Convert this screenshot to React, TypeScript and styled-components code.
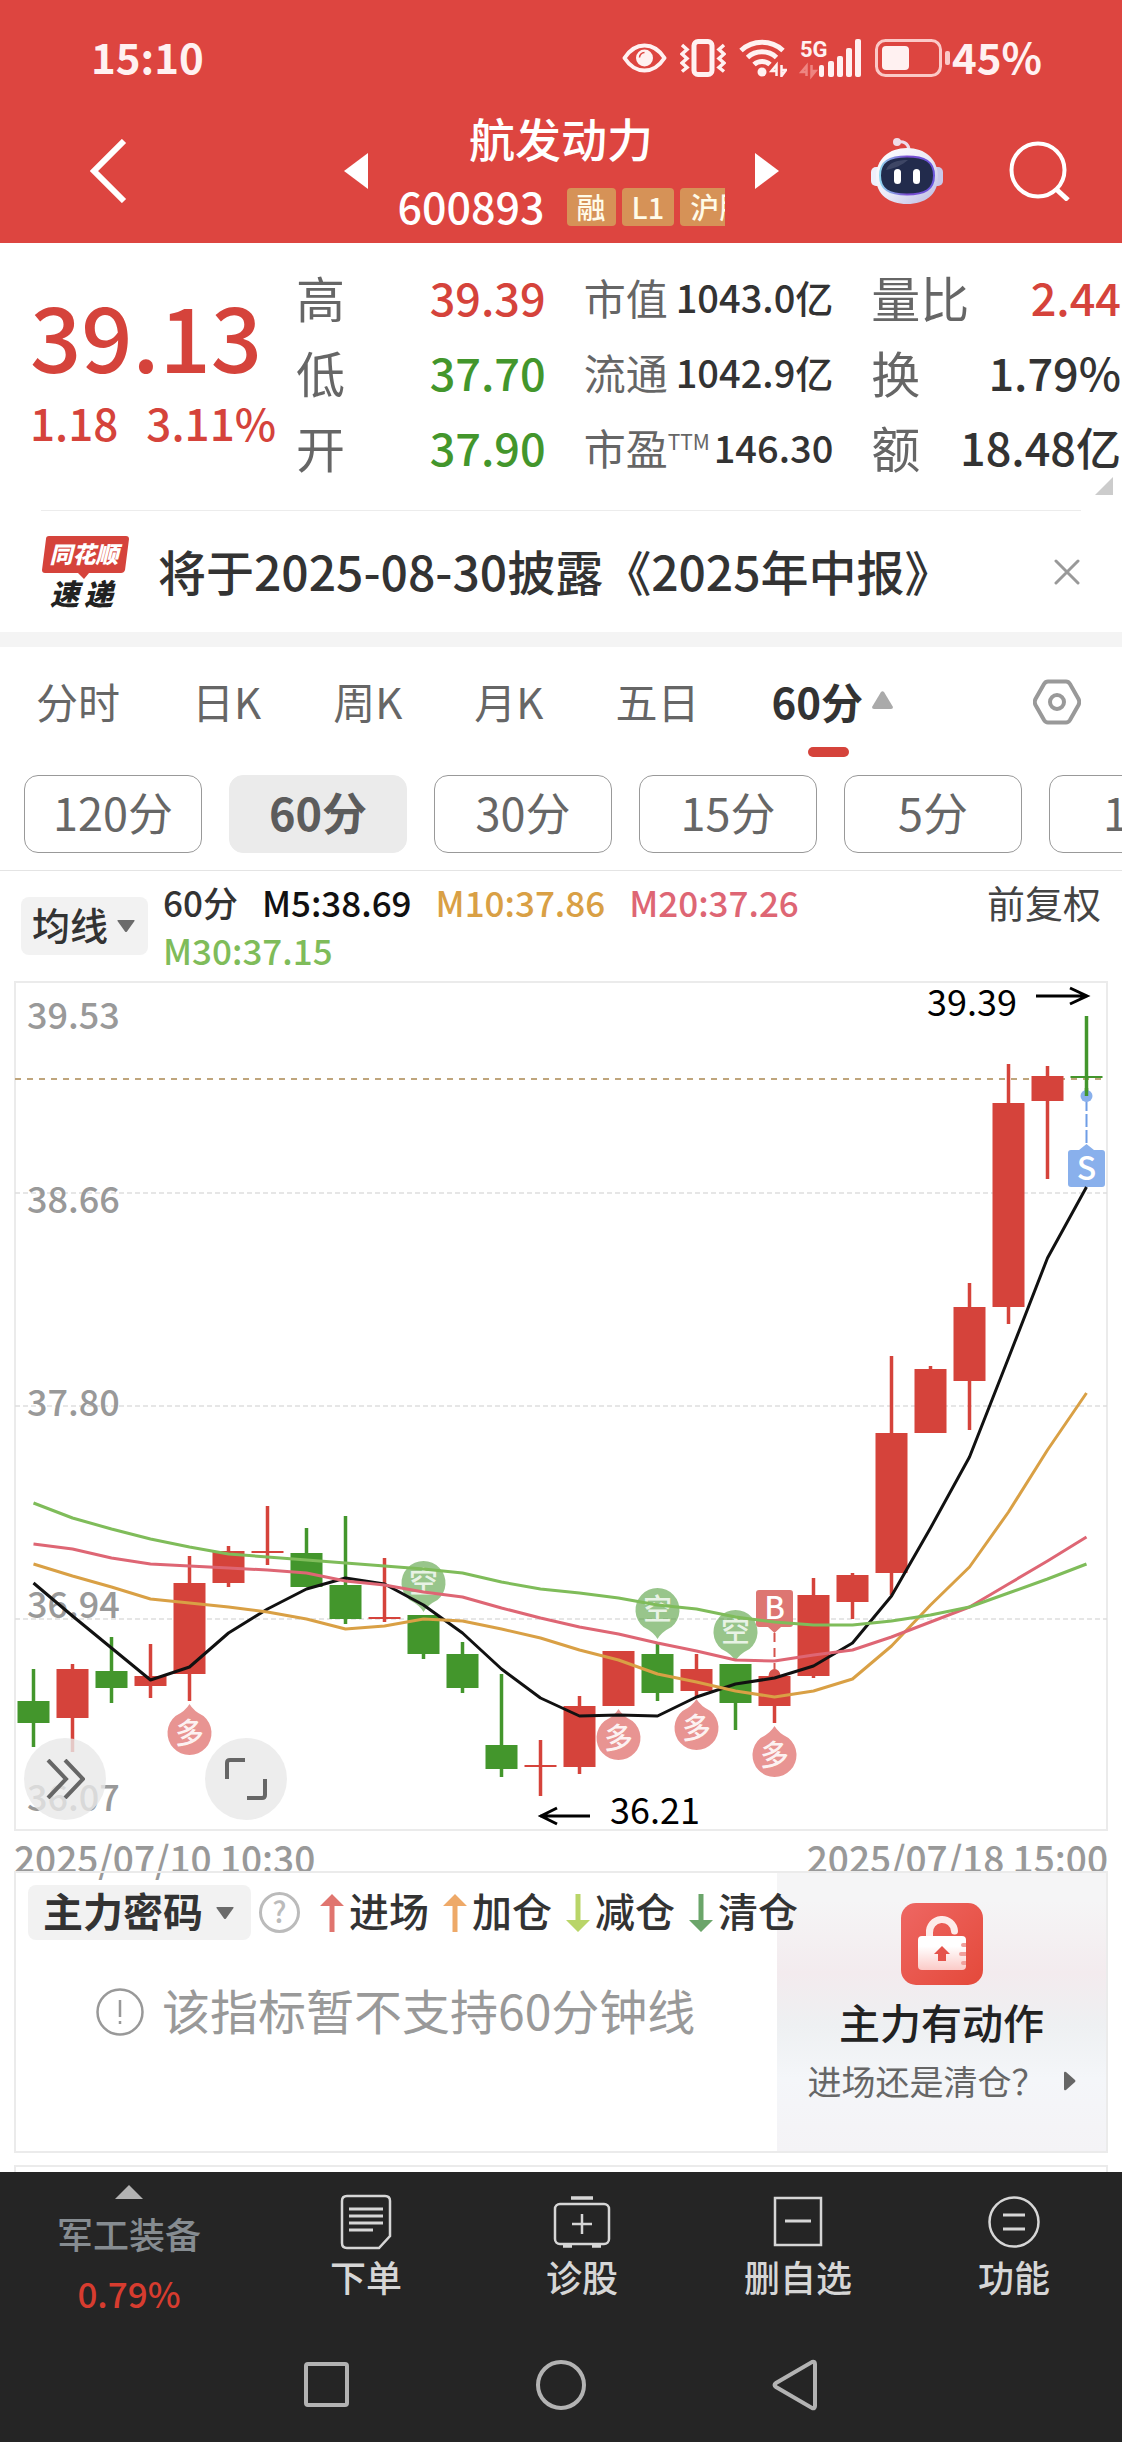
import React from "react";
import styled, { createGlobalStyle } from "styled-components";

const UP = "#d5433b";
const DOWN = "#43962c";
const RULE = "#ebebeb";

const GlobalStyle = createGlobalStyle`
  * { box-sizing: border-box; }
  body {
    margin: 0;
    background: #fff;
    color: #333;
    font-family: "Noto Sans CJK SC", "Noto Sans", sans-serif;
    font-weight: 500;
    overflow-x: hidden;
  }
  button, select { font: inherit; color: inherit; border: 0; background: none; padding: 0; margin: 0; }
  svg { display: block; flex: none; }
  dl, dt, dd, h1, p { margin: 0; font-weight: inherit; }
`;

const Page = styled.main`
  display: flex;
  flex-direction: column;
  min-height: 100vh;
`;

/* ---------- header ---------- */

const Header = styled.header`
  background: #dd4540;
  color: #fff;
`;

const StatusBar = styled.div`
  display: flex;
  align-items: center;
  height: 116px;
  padding: 0 80px 0 91px;
  color: #fff1f1;
`;

const StatusText = styled.span`
  padding-bottom: 5px;
  font-size: 42px;
  font-weight: 700;
  line-height: 48px;
`;

const StatusIcons = styled.div`
  display: flex;
  align-items: center;
  margin-left: auto;
  margin-right: 2px;
  gap: 13px;
`;

const TitleBar = styled.div`
  display: grid;
  grid-template-columns: 1fr auto 1fr;
  align-items: center;
  padding: 0 52px 17px;
`;

const TitleSide = styled.div<{ $end?: boolean }>`
  display: flex;
  align-items: center;
  justify-content: ${(p) => (p.$end ? "flex-end" : "flex-start")};
  padding-left: 38px;
  gap: 66px;
`;

const Switcher = styled.div`
  display: flex;
  align-items: center;
  gap: 30px;
`;

const StockTitle = styled.div`
  display: flex;
  flex-direction: column;
  width: 327px;
  gap: 24px;
`;

const StockName = styled.h1`
  padding-bottom: 6px;
  text-align: center;
  font-size: 46px;
  font-weight: 500;
  line-height: 42px;
`;

const CodeRow = styled.div`
  display: flex;
  align-items: center;
  gap: 6px;
  height: 38px;
  overflow-x: clip;
`;

const Code = styled.span`
  flex: none;
  margin-right: 16px;
  padding-bottom: 4px;
  font-size: 43px;
  line-height: 38px;
`;

const Tag = styled.span`
  flex: none;
  height: 38px;
  padding: 0 10px;
  border-radius: 4px;
  background: #d69257;
  color: #fffbe8;
  font-size: 29px;
  line-height: 36px;
`;

const IconButton = styled.button`
  display: flex;
  align-items: center;
  justify-content: center;
  cursor: pointer;
`;

/* ---------- quote ---------- */

const Quote = styled.section`
  position: relative;
  display: flex;
  padding: 19px 1px 23px 30px;
`;

const PriceBlock = styled.div`
  display: flex;
  flex-direction: column;
  width: 266px;
  flex: none;
  color: ${UP};
`;

const Price = styled.div`
  padding-top: 22px;
  font-size: 90px;
  line-height: 100px;
`;

const Change = styled.div`
  display: flex;
  gap: 28px;
  margin-top: 13px;
  font-size: 44px;
  line-height: 50px;
  white-space: nowrap;
`;

const Stats = styled.dl`
  flex: 1;
  display: grid;
  grid-template-columns: repeat(3, minmax(0, 1fr));
  column-gap: 38px;
`;

const Stat = styled.div<{ $small?: boolean }>`
  display: flex;
  align-items: center;
  justify-content: space-between;
  height: 75px;
  padding-bottom: 6px;
  white-space: nowrap;
  font-size: ${(p) => (p.$small ? 38 : 45)}px;
`;

const StatLabel = styled.dt<{ $small?: boolean }>`
  color: #666;
  font-size: ${(p) => (p.$small ? 42 : 49)}px;
  font-weight: 400;
  sup {
    font-size: 21px;
    line-height: 21px;
    vertical-align: 15px;
  }
`;

const StatValue = styled.dd<{ $color?: string }>`
  color: ${(p) => p.$color ?? "#333"};
`;

const Corner = styled.svg`
  position: absolute;
  right: 9px;
  bottom: 15px;
`;

const News = styled.section`
  display: flex;
  align-items: center;
  height: 122px;
  margin: 0 41px;
  border-top: 1px solid #ececec;
`;

const NewsLink = styled.a`
  flex: 1;
  margin-left: 28px;
  padding-bottom: 4px;
  color: #333;
  font-size: 48px;
  line-height: 60px;
  text-decoration: none;
  white-space: nowrap;
`;

const Band = styled.div`
  height: 15px;
  background: #f4f4f4;
`;

/* ---------- period tabs ---------- */

const Tabs = styled.nav`
  display: flex;
  align-items: center;
  height: 110px;
  padding: 0 41px 0 36px;
  gap: 72px;
`;

const Tab = styled.button<{ $active?: boolean }>`
  position: relative;
  display: flex;
  align-items: center;
  gap: 9px;
  height: 110px;
  padding-bottom: 4px;
  font-size: 42px;
  white-space: nowrap;
  font-weight: ${(p) => (p.$active ? 700 : 400)};
  color: ${(p) => (p.$active ? "#333" : "#666")};
  &::after {
    content: "";
    display: ${(p) => (p.$active ? "block" : "none")};
    position: absolute;
    left: 50%;
    bottom: 0;
    width: 41px;
    height: 10px;
    margin-left: -24px;
    border-radius: 5px;
    background: ${UP};
  }
`;

const SettingsButton = styled(IconButton)`
  margin-left: auto;
`;

const Chips = styled.div`
  display: flex;
  gap: 27px;
  padding: 18px 0 17px 24px;
  overflow: hidden;
  border-bottom: 1px solid #e4e4e4;
`;

const Chip = styled.button<{ $active?: boolean }>`
  flex: none;
  width: 178px;
  height: 78px;
  padding-bottom: 4px;
  border: 1px solid ${(p) => (p.$active ? "#ebebeb" : "#999")};
  border-radius: 14px;
  background: ${(p) => (p.$active ? "#ebebeb" : "#fff")};
  color: ${(p) => (p.$active ? "#5c5c5c" : "#666")};
  font-size: 45px;
  line-height: 60px;
  font-weight: ${(p) => (p.$active ? 700 : 400)};
`;

/* ---------- moving averages ---------- */

const Averages = styled.section`
  display: flex;
  align-items: flex-start;
  padding: 7px 21px;
`;

const Picker = styled.div<{ $tall?: boolean }>`
  display: grid;
  align-items: center;
  flex: none;
  margin-top: ${(p) => (p.$tall ? 0 : 19)}px;
  svg { grid-area: 1 / 1; justify-self: end; margin-right: ${(p) => (p.$tall ? 17 : 13)}px; pointer-events: none; }
`;

const PickerSelect = styled.select<{ $tall?: boolean }>`
  grid-area: 1 / 1;
  appearance: none;
  width: ${(p) => (p.$tall ? 223 : 127)}px;
  height: ${(p) => (p.$tall ? 55 : 58)}px;
  padding-left: ${(p) => (p.$tall ? 15 : 11)}px;
  padding-bottom: 5px;
  border-radius: 8px;
  background: #f2f2f2;
  font-size: ${(p) => (p.$tall ? 40 : 38)}px;
  line-height: 50px;
  font-weight: ${(p) => (p.$tall ? 700 : 500)};
  color: #333;
`;

const Legend = styled.div`
  flex: 1;
  display: flex;
  flex-wrap: wrap;
  column-gap: 24px;
  margin: 0 12px 0 15px;
  font-size: 35px;
  line-height: 48px;
`;

const LegendItem = styled.span<{ $color: string }>`
  color: ${(p) => p.$color};
`;

const AdjustButton = styled.button`
  color: #444;
  font-size: 38px;
  font-weight: 400;
  line-height: 48px;
`;

/* ---------- chart ---------- */

const ChartWrap = styled.section`
  position: relative;
  margin: 0 14px;
`;

const ChartSvg = styled.svg`
  width: 100%;
  height: auto;
  font-family: "Noto Sans CJK SC", "Noto Sans", sans-serif;
`;

const RoundButtons = styled.div`
  position: absolute;
  left: 10px;
  bottom: 11px;
  display: flex;
  gap: 99px;
`;

const RoundButton = styled(IconButton)`
  width: 82px;
  height: 82px;
  border-radius: 50%;
  background: rgba(232, 232, 232, 0.8);
`;

const Dates = styled.div`
  display: flex;
  justify-content: space-between;
  height: 40px;
  margin: 0 14px;
  color: #999;
  font-size: 37px;
  line-height: 52px;
`;

/* ---------- indicator ---------- */

const Indicator = styled.section`
  position: relative;
  display: flex;
  height: 282px;
  margin: 0 14px;
  border: 2px solid ${RULE};
`;

const IndicatorMain = styled.div`
  position: relative;
  z-index: 1;
  flex: 1;
  min-width: 0;
  padding: 12px 0 0 12px;
`;

const IndicatorRow = styled.div`
  display: flex;
  align-items: center;
  white-space: nowrap;
`;

const HelpButton = styled(IconButton)`
  margin: 0 20px 0 8px;
`;

const Signals = styled.div`
  display: flex;
  gap: 14px;
`;

const Signal = styled.span`
  display: flex;
  align-items: center;
  gap: 5px;
  font-size: 40px;
`;

const SignalName = styled.span`
  padding-bottom: 5px;
  line-height: 50px;
`;

const Notice = styled.p`
  display: flex;
  align-items: center;
  gap: 18px;
  margin: 36px 0 0 68px;
  color: #999;
  font-size: 48px;
  font-weight: 400;
  line-height: 72px;
  white-space: nowrap;
`;

const NoticeText = styled.span`
  padding-bottom: 5px;
  line-height: 67px;
`;

const Promo = styled.a`
  display: flex;
  flex-direction: column;
  align-items: center;
  flex: none;
  width: 329px;
  padding-top: 30px;
  background: linear-gradient(#f5f5f6 10%, #f3ebee 36%, #eef0f2 55%, #f4f6f9 74%, #f4f3f6);
  color: #222;
  text-decoration: none;
`;

const PromoTitle = styled.strong`
  margin-top: 8px;
  font-size: 41px;
  line-height: 56px;
  font-weight: 500;
`;

const PromoText = styled.span`
  display: flex;
  align-items: center;
  gap: 18px;
  margin-top: 6px;
  color: #666;
  font-size: 34px;
  font-weight: 400;
  line-height: 52px;
`;

const NextPanel = styled.div`
  height: 7px;
  margin: 12px 14px 0;
  border: 2px solid ${RULE};
  border-bottom: 0;
`;

/* ---------- footer ---------- */

const Footer = styled.footer`
  flex: 1;
  background: #252525;
  color: #d6d6d6;
`;

const Actions = styled.nav`
  display: grid;
  grid-template-columns: 258fr 216fr 216fr 216fr 216fr;
`;

const Action = styled.button`
  display: flex;
  flex-direction: column;
  align-items: center;
  padding-top: 21px;
  font-size: 36px;
  line-height: 50px;
`;

const Sector = styled.button`
  display: flex;
  flex-direction: column;
  align-items: center;
  padding-top: 13px;
  color: #868c91;
  font-size: 36px;
  line-height: 60px;
  svg { margin-bottom: 4px; }
`;

const SectorChange = styled.span`
  color: #d73c2f;
  font-size: 35px;
`;

const SystemNav = styled.nav`
  display: grid;
  grid-template-columns: repeat(3, 1fr);
  padding: 36px 210px 30px;
  justify-items: center;
`;

/* ---------- chart data ---------- */

type Candle = [up: boolean, high: number, low: number, top: number, bottom: number];

const candles: Candle[] = [
  [false, 1669, 1747, 1701, 1723],
  [true, 1664, 1752, 1669, 1718],
  [false, 1637, 1703, 1671, 1688],
  [true, 1644, 1698, 1676, 1686],
  [true, 1556, 1701, 1583, 1674],
  [true, 1546, 1587, 1551, 1583],
  [true, 1506, 1565, 1551, 1553],
  [false, 1528, 1587, 1553, 1587],
  [false, 1516, 1624, 1585, 1619],
  [true, 1558, 1622, 1617, 1619],
  [false, 1615, 1659, 1615, 1654],
  [false, 1642, 1693, 1654, 1688],
  [false, 1674, 1777, 1745, 1769],
  [true, 1740, 1796, 1765, 1767],
  [true, 1696, 1774, 1706, 1767],
  [true, 1651, 1706, 1651, 1706],
  [false, 1644, 1701, 1654, 1693],
  [true, 1654, 1697, 1669, 1691],
  [false, 1664, 1730, 1664, 1703],
  [true, 1672, 1723, 1676, 1706],
  [true, 1578, 1678, 1595, 1676],
  [true, 1573, 1619, 1575, 1602],
  [true, 1356, 1595, 1433, 1573],
  [true, 1366, 1433, 1369, 1433],
  [true, 1283, 1430, 1307, 1381],
  [true, 1064, 1324, 1103, 1307],
  [true, 1066, 1179, 1076, 1101],
  [false, 1016, 1096, 1076, 1078],
];

const averages = [
  { color: "#111", ys: [1583, 1616, 1648, 1680, 1667, 1633, 1609, 1589, 1578, 1584, 1605, 1633, 1669, 1698, 1716, 1715, 1716, 1697, 1684, 1678, 1666, 1643, 1596, 1528, 1457, 1358, 1258, 1187] },
  { color: "#d9a045", ys: [1564, 1576, 1587, 1599, 1603, 1607, 1612, 1619, 1629, 1626, 1619, 1621, 1629, 1638, 1650, 1660, 1674, 1682, 1691, 1697, 1691, 1679, 1646, 1605, 1567, 1512, 1450, 1393] },
  { color: "#de6674", ys: [1544, 1549, 1558, 1564, 1566, 1568, 1570, 1573, 1581, 1585, 1592, 1597, 1608, 1618, 1627, 1634, 1643, 1651, 1660, 1661, 1655, 1650, 1637, 1622, 1607, 1584, 1561, 1537] },
  { color: "#7fbc5a", ys: [1503, 1518, 1529, 1539, 1547, 1554, 1557, 1560, 1563, 1566, 1569, 1573, 1582, 1589, 1593, 1598, 1605, 1609, 1617, 1622, 1625, 1625, 1621, 1615, 1607, 1593, 1579, 1564] },
];

const priceLabels: [string, number][] = [
  ["39.53", 1029],
  ["38.66", 1213],
  ["37.80", 1416],
  ["36.94", 1618],
  ["36.07", 1811],
];

const shortMarks: [number, number][] = [[10, 1583], [16, 1610], [18, 1632]];
const longMarks: [number, number][] = [[4, 1733], [15, 1738], [17, 1728], [19, 1755]];

const columnX = (i: number) => 33.5 + i * 39;

function CandleChart() {
  return (
    <ChartSvg viewBox="14 981 1094 850" role="img" aria-label="60分 K线">
      <rect x="15" y="982" width="1092" height="848" fill="#fff" stroke={RULE} strokeWidth="2" />
      {[1193, 1406, 1619].map((y) => (
        <line key={y} x1="15" x2="1107" y1={y} y2={y} stroke="#dedede" strokeWidth="1.5" strokeDasharray="5 3" />
      ))}
      <line x1="15" x2="1107" y1="1079" y2="1079" stroke="#bfa57c" strokeWidth="2" strokeDasharray="6 6" />
      {priceLabels.map(([text, y]) => (
        <text key={text} x="27" y={y} fontSize="36" fill="#999">{text}</text>
      ))}
      {candles.map(([up, high, low, top, bottom], i) => {
        const x = columnX(i);
        const fill = up ? UP : DOWN;
        return (
          <g key={i} fill={fill}>
            <rect x={x - 1.75} y={high} width="3.5" height={low - high} />
            <rect x={x - 16} y={top} width="32" height={bottom - top} />
          </g>
        );
      })}
      {shortMarks.map(([i, y]) => {
        const x = columnX(i);
        return (
          <g key={i}>
            <path d={`M${x - 14} ${y + 17}A22 22 0 1 1 ${x + 14} ${y + 17}Q${x + 4} ${y + 22} ${x} ${y + 29}Q${x - 4} ${y + 22} ${x - 14} ${y + 17}Z`} fill="#43962c" fillOpacity="0.55" />
            <text x={x} y={y + 10} fontSize="29" fill="#fff" fillOpacity="0.8" textAnchor="middle">空</text>
          </g>
        );
      })}
      {longMarks.map(([i, y]) => {
        const x = columnX(i);
        return (
          <g key={i}>
            <path d={`M${x - 14} ${y - 17}A22 22 0 1 0 ${x + 14} ${y - 17}Q${x + 4} ${y - 22} ${x} ${y - 29}Q${x - 4} ${y - 22} ${x - 14} ${y - 17}Z`} fill="#e89492" />
            <text x={x} y={y + 11} fontSize="29" fill="#fff" fillOpacity="0.9" textAnchor="middle">多</text>
          </g>
        );
      })}
      <g>
        <path d="M759 1590h31a3 3 0 0 1 3 3v31a3 3 0 0 1-3 3h-9l-6.500 6-6.500-6h-9a3 3 0 0 1-3-3v-31a3 3 0 0 1 3-3z" fill="#dd7672" />
        <line x1="774.5" x2="774.5" y1="1633" y2="1672" stroke="#d5534c" strokeWidth="2" strokeDasharray="9 6" />
        <path d="M768.500 1676a6 7 0 0 1 12 0z" fill="#d5534c" />
        <text x="774.5" y="1619" fontSize="31" fill="#fff" textAnchor="middle">B</text>
      </g>
      <g>
        <line x1="1086.5" x2="1086.5" y1="1098" y2="1146" stroke="#6f9de6" strokeWidth="2" strokeDasharray="13 3" />
        <circle cx="1086.5" cy="1096" r="6" fill="#89b0ec" />
        <rect x="1084.75" y="1088" width="3.5" height="8" fill={DOWN} />
        <path d="M1071 1150h8l7.500-6 7.500 6h8a3 3 0 0 1 3 3v31a3 3 0 0 1-3 3h-31a3 3 0 0 1-3-3v-31a3 3 0 0 1 3-3z" fill="#89b0ec" />
        <text x="1086.5" y="1180" fontSize="32" fill="#fff" textAnchor="middle">S</text>
      </g>
      {averages.map(({ color, ys }) => (
        <polyline key={color} points={ys.map((y, i) => `${columnX(i)},${y}`).join(" ")} fill="none" stroke={color} strokeWidth="3" strokeLinejoin="round" />
      ))}
      <g fill="none" stroke="#000" strokeWidth="3">
        <path d="M1036 996h50M1070 988l17 8-17 8" />
        <path d="M590 1816h-50M557 1808l-16 8 16 8" />
      </g>
      <g fill="#000" fontWeight="400" fontSize="36">
        <text x="927" y="1016">39.39</text>
        <text x="610" y="1824">36.21</text>
      </g>
    </ChartSvg>
  );
}

/* ---------- drawings ---------- */

const EyeIcon = () => (
  <svg width="45" height="30" viewBox="0 0 45 30" fill="none" stroke="currentColor" strokeWidth="4">
    <path d="M2.500 15C8 6.500 14.500 2.500 22.500 2.500S37 6.500 42.500 15C37 23.500 30.500 27.500 22.500 27.500S8 23.500 2.500 15z" strokeLinejoin="round" />
    <circle cx="22.500" cy="15" r="8.500" fill="currentColor" stroke="none" />
    <path d="M17.500 14.500a5 5 0 0 1 5-5" stroke="#dd4540" strokeWidth="1.500" />
  </svg>
);

const VibrateIcon = () => (
  <svg width="46" height="38" viewBox="0 0 46 38" fill="none" stroke="currentColor">
    <rect x="14" y="2.500" width="18" height="33" rx="4" strokeWidth="5" />
    <path d="M2 6l5 4.500-5 4.500 5 4.500-5 4.500 5 4.500-5 4M44 6l-5 4.500 5 4.500-5 4.500 5 4.500-5 4.500 5 4" strokeWidth="3.500" />
  </svg>
);

const WifiIcon = () => (
  <svg width="48" height="38" viewBox="0 0 48 38" fill="none" stroke="currentColor" strokeWidth="5">
    <path d="M2 11.500a31 31 0 0 1 42 0M8.500 18.500a21.500 21.500 0 0 1 29 0M15 25.500a12 12 0 0 1 16 0" />
    <circle cx="23" cy="33" r="4.500" fill="currentColor" stroke="none" />
    <path d="M37.500 37V26l-5 6h5M42.500 26v11l4.500-6h-4.500" strokeWidth="2.500" />
  </svg>
);

const SignalIcon = () => (
  <svg width="62" height="38" viewBox="0 0 62 38" fill="currentColor" overflow="visible">
    <text x="0" y="18" fontSize="22" fontWeight="700" fontFamily="Roboto, sans-serif">5G</text>
    <path d="M6.500 37V27l-5 6h5M11.500 26v11l4-5h-4" stroke="#ee8581" strokeWidth="2.500" fill="none" />
    <rect x="19" y="26" width="5" height="12" rx="2" />
    <rect x="28" y="22" width="6" height="16" rx="2" />
    <rect x="37" y="17" width="6" height="21" rx="2" />
    <rect x="46" y="9" width="6" height="29" rx="2" />
    <rect x="55" y="0" width="6" height="38" rx="2" />
  </svg>
);

const BatteryIcon = () => (
  <svg width="75" height="38" viewBox="0 0 75 38">
    <rect x="1.500" y="1.500" width="64" height="35" rx="9" fill="none" stroke="#fbc9c7" strokeWidth="3" />
    <rect x="7" y="7" width="27" height="24" rx="4" fill="currentColor" />
    <rect x="70" y="12" width="5" height="14" rx="2" fill="#fbc9c7" />
  </svg>
);

const RobotIcon = () => (
  <svg width="72" height="66" viewBox="0 0 72 66">
    <defs>
      <linearGradient id="shell" x1="0" y1="0" x2="1" y2="1">
        <stop offset="0" stopColor="#fff" />
        <stop offset="0.5" stopColor="#ecebf8" />
        <stop offset="1" stopColor="#b9b8e2" />
      </linearGradient>
      <linearGradient id="rim" x1="0" y1="0" x2="1" y2="0">
        <stop offset="0" stopColor="#8fd4ee" />
        <stop offset="0.5" stopColor="#7a4bd0" />
        <stop offset="1" stopColor="#6a56dc" />
      </linearGradient>
    </defs>
    <path d="M27 4c5-1 10 1 11 7" fill="none" stroke="#eddcea" strokeWidth="3" />
    <circle cx="26" cy="4" r="4" fill="#f0dce8" />
    <rect x="0" y="29" width="12" height="19" rx="5" fill="#eeeefb" />
    <rect x="60" y="29" width="12" height="19" rx="5" fill="#c9c8ea" />
    <path d="M36 10c18 0 31 11 31 29S54 66 36 66 5 57 5 39s13-29 31-29z" fill="url(#shell)" />
    <path d="M36 18.500c18 0 27 5 27 19s-9 19-27 19-27-5-27-19 9-19 27-19z" fill="#222b4c" stroke="url(#rim)" strokeWidth="2" />
    <path d="M15 32c3-8 12-10 22-10-6 5-12 8-22 10z" fill="#4a5270" opacity="0.7" />
    <rect x="23" y="31" width="7" height="15" rx="3.500" fill="#fff" />
    <rect x="42" y="31" width="7" height="15" rx="3.500" fill="#fff" />
  </svg>
);

const NewsLogo = () => (
  <svg width="89" height="74" viewBox="0 0 89 74" fontWeight="900" fontStyle="italic" overflow="visible">
    <path d="M8 1h77q3 0 3 3l-4 31q-1 3-4 3H48l-5 6-6-6H4q-3 0-3-3L5 4q0-3 3-3z" fill={UP} />
    <text x="43" y="28" fontSize="23" fill="#fff" textAnchor="middle">同花顺</text>
    <text x="9" y="70" fontSize="29" fill="#222">速</text>
    <text x="43" y="70" fontSize="29" fill="#222">递</text>
  </svg>
);

const DownTriangle = () => (
  <svg width="18" height="12" viewBox="0 0 18 12"><path d="M1 0h16q1 0 .5 1L10 11.500q-1 1-2 0L.5 1Q0 0 1 0z" fill="#6b6b6b" /></svg>
);

const Arrow = ({ color, down }: { color: string; down?: boolean }) => (
  <svg width="24" height="38" viewBox="0 0 24 38">
    <path d={down ? "M9.500 0h5v26H24L12 38 0 26h9.500z" : "M9.500 38h5V12H24L12 0 0 12h9.500z"} fill={color} />
  </svg>
);

const LockIcon = () => (
  <svg width="82" height="82" viewBox="0 0 82 82">
    <defs>
      <linearGradient id="lockBg" x1="0" y1="0" x2="1" y2="1">
        <stop offset="0" stopColor="#ee6763" />
        <stop offset="1" stopColor="#e4493a" />
      </linearGradient>
      <linearGradient id="lockBody" x1="0" y1="0" x2="0" y2="1">
        <stop offset="0.300" stopColor="#fff" />
        <stop offset="1" stopColor="#fbcac7" />
      </linearGradient>
    </defs>
    <rect width="82" height="82" rx="15" fill="url(#lockBg)" />
    <path d="M28.500 36v-6a12.500 12.500 0 0 1 25-2" fill="none" stroke="#fdecea" strokeWidth="7" strokeLinecap="round" />
    <rect x="17" y="33" width="48" height="34" rx="4" fill="url(#lockBody)" />
    <path d="M41 43l8 8h-4v7h-8v-7h-4z" fill="#e5534b" />
    <path d="M65 40h-3a2 2 0 0 0 0 4h3zM65 49h-5a2 2 0 0 0 0 4h5zM65 58h-3a2 2 0 0 0 0 4h3z" fill="#f0a09c" />
  </svg>
);

const periods = ["分时", "日K", "周K", "月K", "五日"];
const minutes = ["120分", "60分", "30分", "15分", "5分", "1分"];

export default function App() {
  return (
    <>
      <GlobalStyle />
      <Page>
        <Header>
          <StatusBar>
            <StatusText>15:10</StatusText>
            <StatusIcons>
              <EyeIcon />
              <VibrateIcon />
              <WifiIcon />
              <SignalIcon />
              <BatteryIcon />
            </StatusIcons>
            <StatusText>45%</StatusText>
          </StatusBar>
          <TitleBar>
            <TitleSide>
              <IconButton aria-label="返回">
                <svg width="37" height="64" viewBox="0 0 37 64" fill="none" stroke="#fff" strokeWidth="6"><path d="M34 2L4 32l30 30" /></svg>
              </IconButton>
            </TitleSide>
            <Switcher>
              <IconButton aria-label="上一只">
                <svg width="24" height="36" viewBox="0 0 24 36"><path d="M24 0v36L0 18z" fill="#fff" /></svg>
              </IconButton>
              <StockTitle>
                <StockName>航发动力</StockName>
                <CodeRow>
                  <Code>600893</Code>
                  <Tag>融</Tag>
                  <Tag>L1</Tag>
                  <Tag>沪股通</Tag>
                </CodeRow>
              </StockTitle>
              <IconButton aria-label="下一只">
                <svg width="24" height="36" viewBox="0 0 24 36"><path d="M0 0v36l24-18z" fill="#fff" /></svg>
              </IconButton>
            </Switcher>
            <TitleSide $end>
              <IconButton aria-label="助手"><RobotIcon /></IconButton>
              <IconButton aria-label="搜索">
                <svg width="61" height="60" viewBox="0 0 61 60" fill="none" stroke="#fff" strokeWidth="4"><circle cx="29" cy="29" r="26.500" /><path d="M47 48l12 11" strokeWidth="5" /></svg>
              </IconButton>
            </TitleSide>
          </TitleBar>
        </Header>

        <Quote>
          <PriceBlock>
            <Price>39.13</Price>
            <Change><span>1.18</span><span>3.11%</span></Change>
          </PriceBlock>
          <Stats>
            <Stat><StatLabel>高</StatLabel><StatValue $color={UP}>39.39</StatValue></Stat>
            <Stat $small><StatLabel $small>市值</StatLabel><StatValue>1043.0亿</StatValue></Stat>
            <Stat><StatLabel>量比</StatLabel><StatValue $color={UP}>2.44</StatValue></Stat>
            <Stat><StatLabel>低</StatLabel><StatValue $color={DOWN}>37.70</StatValue></Stat>
            <Stat $small><StatLabel $small>流通</StatLabel><StatValue>1042.9亿</StatValue></Stat>
            <Stat><StatLabel>换</StatLabel><StatValue>1.79%</StatValue></Stat>
            <Stat><StatLabel>开</StatLabel><StatValue $color={DOWN}>37.90</StatValue></Stat>
            <Stat $small><StatLabel $small>市盈<sup>TTM</sup></StatLabel><StatValue>146.30</StatValue></Stat>
            <Stat><StatLabel>额</StatLabel><StatValue>18.48亿</StatValue></Stat>
          </Stats>
          <Corner width="18" height="18" viewBox="0 0 18 18"><path d="M18 0v18H0z" fill="#ccc" /></Corner>
        </Quote>

        <News>
          <NewsLogo />
          <NewsLink href="#news">将于2025-08-30披露《2025年中报》</NewsLink>
          <IconButton aria-label="关闭">
            <svg width="28" height="26" viewBox="0 0 28 26" stroke="#999" strokeWidth="3" strokeLinecap="round"><path d="M3 2l22 22M25 2L3 24" /></svg>
          </IconButton>
        </News>
        <Band />

        <Tabs>
          {periods.map((p) => <Tab key={p}>{p}</Tab>)}
          <Tab $active>
            60分
            <svg width="21" height="18" viewBox="0 0 21 18"><path d="M9 1q1.500-1.500 3 0l9 15q0 2-2 2H2q-2 0-2-2z" fill="#aaa" /></svg>
          </Tab>
          <SettingsButton aria-label="设置">
            <svg width="48" height="46" viewBox="0 0 48 46" fill="none" stroke="#999" strokeWidth="4">
              <path d="M15 2.500h18q2.500 0 4 2.500l8.500 15q1.500 3 0 6L37 41q-1.500 2.500-4 2.500H15q-2.500 0-4-2.500L2.500 26q-1.500-3 0-6L11 5q1.500-2.500 4-2.500z" />
              <circle cx="24" cy="23" r="7" />
            </svg>
          </SettingsButton>
        </Tabs>
        <Chips>
          {minutes.map((m) => <Chip key={m} $active={m === "60分"}>{m}</Chip>)}
        </Chips>

        <Averages>
          <Picker>
            <PickerSelect aria-label="主图指标"><option>均线</option></PickerSelect>
            <DownTriangle />
          </Picker>
          <Legend>
            <LegendItem $color="#333">60分</LegendItem>
            <LegendItem $color="#111">M5:38.69</LegendItem>
            <LegendItem $color="#d9a045">M10:37.86</LegendItem>
            <LegendItem $color="#de6674">M20:37.26</LegendItem>
            <LegendItem $color="#7fbc5a">M30:37.15</LegendItem>
          </Legend>
          <AdjustButton>前复权</AdjustButton>
        </Averages>

        <ChartWrap>
          <CandleChart />
          <RoundButtons>
            <RoundButton aria-label="展开">
              <svg width="40" height="40" viewBox="0 0 40 40" fill="none" stroke="#666" strokeWidth="4"><path d="M3 1l18 19L3 39M20 1l18 19-18 19" /></svg>
            </RoundButton>
            <RoundButton aria-label="全屏">
              <svg width="42" height="42" viewBox="0 0 42 42" fill="none" stroke="#666" strokeWidth="4"><path d="M20 2H5q-3 0-3 3v16M22 40h15q3 0 3-3V21" /></svg>
            </RoundButton>
          </RoundButtons>
        </ChartWrap>
        <Dates><time>2025/07/10 10:30</time><time>2025/07/18 15:00</time></Dates>

        <Indicator>
          <IndicatorMain>
            <IndicatorRow>
              <Picker $tall>
                <PickerSelect $tall aria-label="副图指标"><option>主力密码</option></PickerSelect>
                <DownTriangle />
              </Picker>
              <HelpButton aria-label="帮助">
                <svg width="41" height="41" viewBox="0 0 41 41"><circle cx="20.500" cy="20.500" r="19" fill="none" stroke="#bbb" strokeWidth="3" /><text x="20.500" y="31" fontSize="29" fill="#bbb" textAnchor="middle">?</text></svg>
              </HelpButton>
              <Signals>
                <Signal><Arrow color="#e0756f" /><SignalName>进场</SignalName></Signal>
                <Signal><Arrow color="#eea968" /><SignalName>加仓</SignalName></Signal>
                <Signal><Arrow color="#b9d569" down /><SignalName>减仓</SignalName></Signal>
                <Signal><Arrow color="#6ba56a" down /><SignalName>清仓</SignalName></Signal>
              </Signals>
            </IndicatorRow>
            <Notice>
              <svg width="48" height="48" viewBox="0 0 48 48" fill="none" stroke="#999" strokeWidth="2.500"><circle cx="24" cy="24" r="22.500" /><path d="M24 12v17M24 33v3" /></svg>
              <NoticeText>该指标暂不支持60分钟线</NoticeText>
            </Notice>
          </IndicatorMain>
          <Promo href="#signals">
            <LockIcon />
            <PromoTitle>主力有动作</PromoTitle>
            <PromoText>
              进场还是清仓？
              <svg width="12" height="20" viewBox="0 0 12 20"><path d="M0 2q0-2 2-1l9 8q1 1 0 2l-9 8q-2 1-2-1z" fill="#666" /></svg>
            </PromoText>
          </Promo>
        </Indicator>
        <NextPanel />

        <Footer>
          <Actions>
            <Sector>
              <svg width="28" height="14" viewBox="0 0 28 14"><path d="M14 0l14 14H0z" fill="#b3b3b3" /></svg>
              军工装备
              <SectorChange>0.79%</SectorChange>
            </Sector>
            <Action>
              <svg width="58" height="58" viewBox="0 0 58 58" fill="none" stroke="#d6d6d6" strokeWidth="2.500">
                <path d="M10 3h38q5 0 5 5v35L42 55H10q-5 0-5-5V8q0-5 5-5z" />
                <path d="M12 16h34M12 23h34M12 30h34M12 37h24" strokeWidth="3" />
              </svg>
              下单
            </Action>
            <Action>
              <svg width="58" height="58" viewBox="0 0 58 58" fill="none" stroke="#d6d6d6" strokeWidth="2.500">
                <rect x="2" y="11" width="54" height="40" rx="5" />
                <path d="M29 21v20M19 31h20" />
                <path d="M18 5h22M10 53h9M39 53h9" strokeWidth="3.500" />
              </svg>
              诊股
            </Action>
            <Action>
              <svg width="58" height="58" viewBox="0 0 58 58" fill="none" stroke="#d6d6d6" strokeWidth="2.500">
                <rect x="6" y="5" width="46" height="47" />
                <path d="M16 28h26" strokeWidth="3" />
              </svg>
              删自选
            </Action>
            <Action>
              <svg width="58" height="58" viewBox="0 0 58 58" fill="none" stroke="#d6d6d6" strokeWidth="2.500">
                <circle cx="29" cy="29" r="24.500" />
                <path d="M18 22h22M18 36h22" strokeWidth="3" />
              </svg>
              功能
            </Action>
          </Actions>
          <SystemNav>
            <IconButton aria-label="最近任务">
              <svg width="52" height="52" viewBox="0 0 52 52" fill="none" stroke="#b3b3b3" strokeWidth="4"><rect x="5" y="5" width="41" height="41" rx="2" /></svg>
            </IconButton>
            <IconButton aria-label="主屏幕">
              <svg width="52" height="52" viewBox="0 0 52 52" fill="none" stroke="#b3b3b3" strokeWidth="4"><circle cx="26" cy="26" r="23" /></svg>
            </IconButton>
            <IconButton aria-label="返回上级">
              <svg width="52" height="52" viewBox="0 0 52 52" fill="none" stroke="#b3b3b3" strokeWidth="4"><path d="M43 3q3-1 3 2v42q0 3-3 2L7 28q-3-2 0-4z" /></svg>
            </IconButton>
          </SystemNav>
        </Footer>
      </Page>
    </>
  );
}
